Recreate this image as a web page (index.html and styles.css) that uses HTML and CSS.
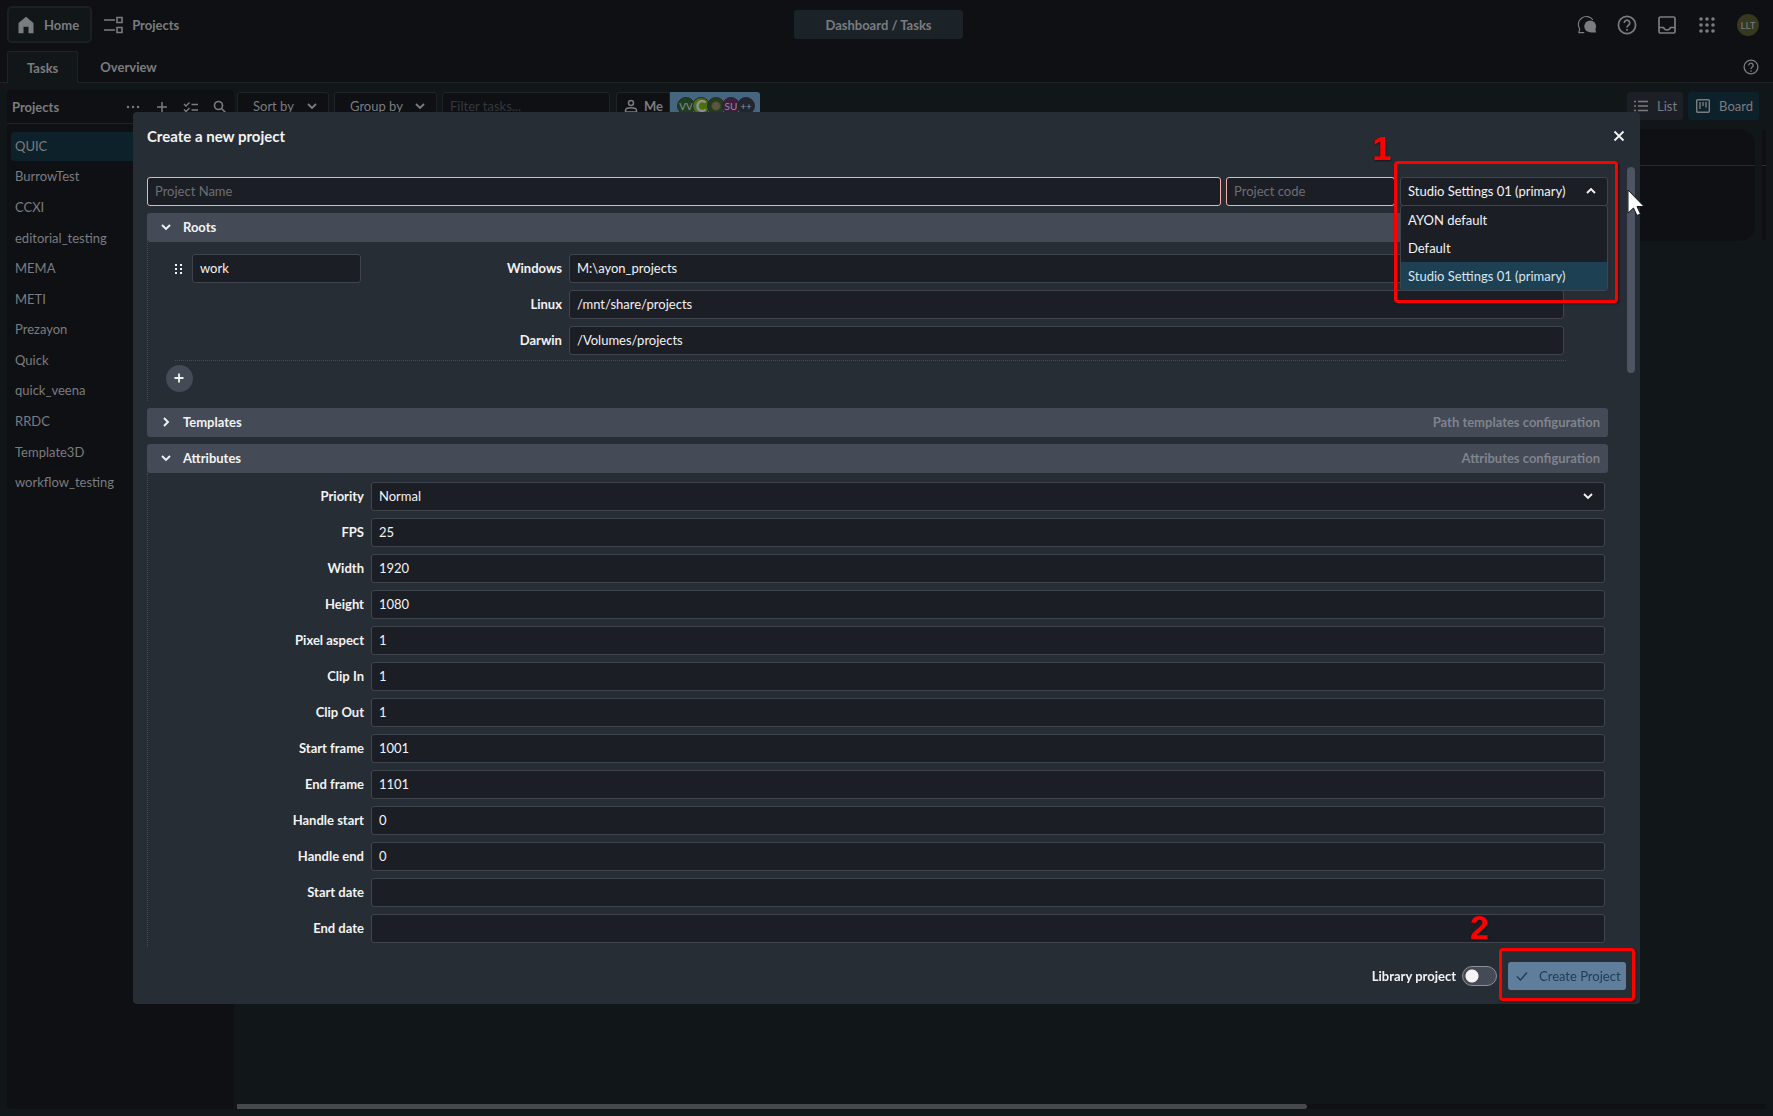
FILE: index.html
```html
<!DOCTYPE html>
<html lang="en">
<head>
    <title>Dashboard / Tasks</title>
    <meta charset="UTF-8">
    <meta name="viewport" content="width=device-width, initial-scale=1.0">
    <link rel="stylesheet" href="styles.css">
</head>
<body>
    <div class="app">
        <header class="topbar">
            <nav class="topbar-nav">
                <a class="nav-link active" href="#">
                    <svg class="icon" viewBox="0 0 24 24"><path fill="currentColor" d="M3 22V9.500l9-7.500 9 7.500V22h-6v-8H9v8z"/></svg>
                    Home
                </a>
                <a class="nav-link" href="#">
                    <svg class="icon" viewBox="0 0 20 20" fill="none" stroke="currentColor" stroke-width="1.600"><path d="M0 5h11M0 15h11M13 2.500h5v5h-5zM13 12.500h5v5h-5z"/></svg>
                    Projects
                </a>
            </nav>
            <button class="breadcrumb">Dashboard / Tasks</button>
            <div class="topbar-actions">
                <button class="icon-btn" aria-label="Feedback">
                    <svg class="icon" viewBox="0 0 22 20"><path fill="none" stroke="currentColor" stroke-width="1.300" d="M8 18.300H2l1-3.800A8.500 8.500 0 1 1 17.500 4.500"/><circle cx="14.500" cy="11.500" r="6.500" fill="currentColor"/><path fill="currentColor" d="M14.500 18.300H21l-.8-4z"/></svg>
                </button>
                <button class="icon-btn" aria-label="Help">
                    <svg class="icon" viewBox="0 0 20 20" fill="none" stroke="currentColor" stroke-width="1.700"><circle cx="10" cy="10" r="8.600"/><path d="M7.300 8a2.700 2.700 0 1 1 4.400 2c-1 .8-1.700 1.300-1.700 2.500M10 14v1.800"/></svg>
                </button>
                <button class="icon-btn" aria-label="Inbox">
                    <svg class="icon" viewBox="0 0 20 20" fill="none" stroke="currentColor" stroke-width="1.700"><rect x="2" y="2" width="16" height="16" rx="1.500"/><path d="M2 12.500h4.500c.6 1.700 2 2.500 3.500 2.500s2.900-.8 3.500-2.500H18"/></svg>
                </button>
                <button class="icon-btn" aria-label="Apps">
                    <svg class="icon" viewBox="0 0 20 20" fill="currentColor"><circle cx="4" cy="4" r="1.800"/><circle cx="10" cy="4" r="1.800"/><circle cx="16" cy="4" r="1.800"/><circle cx="4" cy="10" r="1.800"/><circle cx="10" cy="10" r="1.800"/><circle cx="16" cy="10" r="1.800"/><circle cx="4" cy="16" r="1.800"/><circle cx="10" cy="16" r="1.800"/><circle cx="16" cy="16" r="1.800"/></svg>
                </button>
                <button class="user">LLT</button>
            </div>
        </header>

        <nav class="tabs">
            <a class="tab active" href="#">Tasks</a>
            <a class="tab" href="#">Overview</a>
            <button class="icon-btn tabs-help" aria-label="Page help">
                <svg class="icon-sm" viewBox="0 0 20 20" fill="none" stroke="currentColor" stroke-width="1.700"><circle cx="10" cy="10" r="8.600"/><path d="M7.300 8a2.700 2.700 0 1 1 4.400 2c-1 .8-1.700 1.300-1.700 2.500M10 14v1.800"/></svg>
            </button>
        </nav>

        <main class="workspace">
            <aside class="sidebar">
                <div class="sidebar-header">
                    <span class="sidebar-title">Projects</span>
                    <button class="icon-btn" aria-label="More"><svg class="icon-sm" viewBox="0 0 16 16" fill="currentColor"><circle cx="3" cy="8" r="1.200"/><circle cx="8" cy="8" r="1.200"/><circle cx="13" cy="8" r="1.200"/></svg></button>
                    <button class="icon-btn" aria-label="Add project"><svg class="icon-sm" viewBox="0 0 16 16" fill="none" stroke="currentColor" stroke-width="1.500"><path d="M8 3v10M3 8h10"/></svg></button>
                    <button class="icon-btn" aria-label="Select"><svg class="icon-sm" viewBox="0 0 16 16" fill="none" stroke="currentColor" stroke-width="1.400"><path d="M1 5l2 2 3.500-3.500M1 10.500l2 2L6.500 9M8.500 5.500H15M8.500 11H15"/></svg></button>
                    <button class="icon-btn" aria-label="Search"><svg class="icon-sm" viewBox="0 0 16 16" fill="none" stroke="currentColor" stroke-width="1.600"><circle cx="6.500" cy="6.500" r="4"/><path d="M9.500 9.500l5 5"/></svg></button>
                </div>
                <ul class="project-list">
                    <li><a class="active" href="#">QUIC</a></li>
                    <li><a href="#">BurrowTest</a></li>
                    <li><a href="#">CCXI</a></li>
                    <li><a href="#">editorial_testing</a></li>
                    <li><a href="#">MEMA</a></li>
                    <li><a href="#">METI</a></li>
                    <li><a href="#">Prezayon</a></li>
                    <li><a href="#">Quick</a></li>
                    <li><a href="#">quick_veena</a></li>
                    <li><a href="#">RRDC</a></li>
                    <li><a href="#">Template3D</a></li>
                    <li><a href="#">workflow_testing</a></li>
                </ul>
            </aside>

            <section class="board">
                <div class="toolbar">
                    <button class="drop sort">Sort by
                        <svg class="icon-sm" viewBox="0 0 16 16" fill="none" stroke="currentColor" stroke-width="1.800"><path d="M4 6l4 4 4-4"/></svg>
                    </button>
                    <button class="drop group">Group by
                        <svg class="icon-sm" viewBox="0 0 16 16" fill="none" stroke="currentColor" stroke-width="1.800"><path d="M4 6l4 4 4-4"/></svg>
                    </button>
                    <input class="filter" type="text" placeholder="Filter tasks..." aria-label="Filter tasks">
                    <div class="assignees">
                        <button class="me">
                            <svg class="icon-sm" viewBox="0 0 16 16" fill="none" stroke="currentColor" stroke-width="1.500"><circle cx="8" cy="5" r="2.500"/><path d="M2.500 14v-1.500c0-1.500 2.500-2.700 5.500-2.700s5.500 1.200 5.500 2.700V14z"/></svg>
                            Me
                        </button>
                        <button class="avatars" aria-label="Assignees">
                            <span class="avatar green">VV</span>
                            <span class="avatar lime">C</span>
                            <span class="avatar photo"></span>
                            <span class="avatar purple">SU</span>
                            <span class="avatar more">++</span>
                        </button>
                    </div>
                    <div class="views">
                        <button class="view">
                            <svg class="icon-sm" viewBox="0 0 16 16" fill="none" stroke="currentColor" stroke-width="1.700"><path d="M1 3.500h2M1 8h2M1 12.500h2M5 3.500h10M5 8h10M5 12.500h10"/></svg>
                            List
                        </button>
                        <button class="view active">
                            <svg class="icon-sm" viewBox="0 0 16 16" fill="none" stroke="currentColor" stroke-width="1.400"><rect x="1.700" y="1.700" width="12.600" height="12.600" rx="1"/><path d="M5 4v7M8 4v4M11 4v5.500"/></svg>
                            Board
                        </button>
                    </div>
                </div>
                <div class="columns">
                    <div class="column red"></div>
                    <div class="column magenta"></div>
                </div>
                <div class="track"><div class="thumb"></div></div>
            </section>
        </main>
    </div>

    <div class="overlay">
        <form class="dialog" role="dialog" aria-labelledby="dialog-title">
            <div class="dialog-header">
                <h1 id="dialog-title">Create a new project</h1>
                <button class="close" type="button" aria-label="Close">
                    <svg class="icon-sm" viewBox="0 0 16 16" fill="none" stroke="currentColor" stroke-width="1.800"><path d="M3.500 3.500l9 9M12.500 3.500l-9 9"/></svg>
                </button>
            </div>

            <div class="dialog-body">
                <div class="name-row">
                    <input class="field invalid" type="text" placeholder="Project Name" aria-label="Project name">
                    <input class="field invalid" type="text" placeholder="Project code" aria-label="Project code">
                    <div class="preset">
                        <select class="field" aria-label="Anatomy preset">
                            <option>Studio Settings 01 (primary)</option>
                        </select>
                        <svg class="icon-sm arrow" viewBox="0 0 16 16" fill="none" stroke="currentColor" stroke-width="1.900"><path d="M4 10l4-4 4 4"/></svg>
                        <ul class="menu" role="listbox" aria-label="Presets">
                            <li role="option">AYON default</li>
                            <li role="option">Default</li>
                            <li class="selected" role="option" aria-selected="true">Studio Settings 01 (primary)</li>
                        </ul>
                        <div class="callout callout-preset"><span>1</span></div>
                    </div>
                </div>

                <section class="panel">
                    <button class="panel-header" type="button">
                        <svg class="icon-sm" viewBox="0 0 16 16" fill="none" stroke="currentColor" stroke-width="1.900"><path d="M4 6l4 4 4-4"/></svg>
                        <span>Roots</span>
                    </button>
                    <div class="panel-body roots">
                        <div class="root">
                            <svg class="grip" viewBox="0 0 8 12" fill="currentColor"><path d="M0 1h2v2H0zM5 1h2v2H5zM0 5h2v2H0zM5 5h2v2H5zM0 9h2v2H0zM5 9h2v2H5z"/></svg>
                            <input class="field root-name" type="text" value="work" aria-label="Root name">
                            <div class="root-paths">
                                <label for="root-windows">Windows</label>
                                <input class="field" type="text" id="root-windows" value="M:\ayon_projects">
                                <label for="root-linux">Linux</label>
                                <input class="field" type="text" id="root-linux" value="/mnt/share/projects">
                                <label for="root-darwin">Darwin</label>
                                <input class="field" type="text" id="root-darwin" value="/Volumes/projects">
                            </div>
                        </div>
                        <button class="add" type="button" aria-label="Add root">
                            <svg class="icon-sm" viewBox="0 0 16 16" fill="none" stroke="currentColor" stroke-width="1.800"><path d="M8 3.500v9M3.500 8h9"/></svg>
                        </button>
                    </div>
                </section>

                <section class="panel">
                    <button class="panel-header" type="button">
                        <svg class="icon-sm" viewBox="0 0 16 16" fill="none" stroke="currentColor" stroke-width="1.900"><path d="M6 4l4 4-4 4"/></svg>
                        <span>Templates</span>
                        <span class="hint">Path templates configuration</span>
                    </button>
                </section>

                <section class="panel">
                    <button class="panel-header" type="button">
                        <svg class="icon-sm" viewBox="0 0 16 16" fill="none" stroke="currentColor" stroke-width="1.900"><path d="M4 6l4 4 4-4"/></svg>
                        <span>Attributes</span>
                        <span class="hint">Attributes configuration</span>
                    </button>
                    <div class="panel-body attributes">
                        <label for="priority">Priority</label>
                        <div class="select-wrap">
                            <select class="field" id="priority">
                                <option>Normal</option>
                            </select>
                            <svg class="icon-sm arrow" viewBox="0 0 16 16" fill="none" stroke="currentColor" stroke-width="1.900"><path d="M4 6l4 4 4-4"/></svg>
                        </div>
                        <label for="fps">FPS</label>
                        <input class="field" type="text" id="fps" value="25">
                        <label for="width">Width</label>
                        <input class="field" type="text" id="width" value="1920">
                        <label for="height">Height</label>
                        <input class="field" type="text" id="height" value="1080">
                        <label for="pixel-aspect">Pixel aspect</label>
                        <input class="field" type="text" id="pixel-aspect" value="1">
                        <label for="clip-in">Clip In</label>
                        <input class="field" type="text" id="clip-in" value="1">
                        <label for="clip-out">Clip Out</label>
                        <input class="field" type="text" id="clip-out" value="1">
                        <label for="start-frame">Start frame</label>
                        <input class="field" type="text" id="start-frame" value="1001">
                        <label for="end-frame">End frame</label>
                        <input class="field" type="text" id="end-frame" value="1101">
                        <label for="handle-start">Handle start</label>
                        <input class="field" type="text" id="handle-start" value="0">
                        <label for="handle-end">Handle end</label>
                        <input class="field" type="text" id="handle-end" value="0">
                        <label for="start-date">Start date</label>
                        <input class="field" type="text" id="start-date">
                        <label for="end-date">End date</label>
                        <input class="field" type="text" id="end-date">
                    </div>
                </section>
            </div>

            <div class="dialog-footer">
                <label for="library">Library project</label>
                <input class="switch" type="checkbox" id="library">
                <div class="submit">
                    <button class="create" type="submit">
                        <svg class="icon-sm" viewBox="0 0 16 16" fill="none" stroke="currentColor" stroke-width="1.300"><path d="M3 8.500l3.500 3.500L13 4.500"/></svg>
                        Create Project
                    </button>
                    <div class="callout callout-create"><span>2</span></div>
                </div>
            </div>

            <div class="scrollbar"></div>
            <svg class="cursor" viewBox="0 0 18 28"><path fill="#fff" stroke="#14161c" stroke-width="1" d="M1 1v23l5.500-5 3.500 7.500 3.500-1.500-3.500-7.500H17z"/></svg>
        </form>
    </div>
</body>
</html>
```
FILE: styles.css
```css
* {
    box-sizing: border-box;
    margin: 0;
    padding: 0;
}

body {
    font-family: Lato, "Noto Sans", sans-serif;
    font-size: 13px;
    line-height: 18px;
    background: #111619;
    color: #7b7c7f;
    overflow: hidden;
}

button,
input,
select {
    font: inherit;
    color: inherit;
    border: none;
    background: none;
}

a {
    color: inherit;
    text-decoration: none;
}

ul {
    list-style: none;
}

.icon {
    display: block;
    width: 20px;
    height: 20px;
}

.icon-sm {
    display: block;
    flex: none;
    width: 16px;
    height: 16px;
}

.app {
    display: flex;
    flex-direction: column;
    height: 100vh;
}

/* top bar */
.topbar {
    display: grid;
    grid-template-columns: 1fr auto 1fr;
    align-items: center;
    height: 51px;
    padding: 0 14px 2px 7px;
    background: #0f1014;
    font-weight: 700;
}

.topbar-nav {
    display: flex;
}

.nav-link {
    display: flex;
    align-items: center;
    gap: 8px;
    height: 37px;
    padding: 0 10px;
    border: 2px solid transparent;
    border-radius: 5px;
}

.nav-link.active {
    padding: 0 11px 0 7px;
    border-color: #1c2023;
    background: #111619;
}

.breadcrumb {
    width: 169px;
    height: 29px;
    margin-right: 9px;
    border-radius: 3px;
    background: #1b2329;
}

.topbar-actions {
    display: flex;
    align-items: center;
    justify-content: flex-end;
    gap: 20px;
}

.user {
    width: 22px;
    height: 22px;
    border-radius: 50%;
    background: #36391f;
    font-size: 10px;
    font-weight: 400;
}

.tabs {
    display: flex;
    height: 32px;
    padding: 0 14px 0 7px;
    border-bottom: 1px solid #202326;
    background: #0f1014;
    font-weight: 700;
}

.tab {
    display: flex;
    align-items: center;
    height: 31px;
    padding: 0 22px;
}

.tab.active {
    height: 32px;
    padding: 0 19px;
    border: 1px solid #202326;
    border-bottom: none;
    border-radius: 3px 3px 0 0;
    background: #111619;
}

.tabs-help {
    margin-left: auto;
}

/* workspace */
.workspace {
    display: flex;
    flex: 1;
    gap: 3px;
    min-height: 0;
    padding: 7px;
}

.sidebar {
    width: 227px;
    border-radius: 4px;
    background: #0f1014;
}

.sidebar-header {
    display: flex;
    align-items: center;
    gap: 13px;
    height: 34px;
    padding: 0 6px 0 5px;
    border-bottom: 1px solid #202326;
}

.sidebar-title {
    margin-right: auto;
    font-weight: 700;
}

.project-list {
    display: grid;
    grid-auto-rows: 1fr;
    gap: 2px;
    height: 365px;
    margin: 8px 4px;
}

.project-list a {
    display: flex;
    align-items: center;
    height: 100%;
    padding: 0 4px 1px;
    border-radius: 3px;
}

.project-list a.active {
    background: #0d212b;
}

.board {
    display: flex;
    flex: 1;
    flex-direction: column;
    min-width: 0;
    padding-top: 2px;
}

.toolbar {
    display: flex;
    gap: 5px;
    height: 28px;
}

.drop {
    display: flex;
    align-items: center;
    justify-content: space-between;
    padding: 0 8px 0 15px;
    border: 1px solid #202326;
    border-radius: 3px;
    background: #0f1014;
}

.sort {
    width: 92px;
}

.group {
    width: 103px;
}

.filter {
    width: 168px;
    padding: 0 7px;
    border: 1px solid #202326;
    border-radius: 3px;
    background: #0f1014;
}

.filter::placeholder {
    color: #35373a;
}

.assignees {
    display: flex;
    margin-left: 1px;
}

.me {
    display: flex;
    align-items: center;
    gap: 5px;
    width: 54px;
    padding: 0 6px;
    border: 1px solid #202326;
    border-radius: 3px 0 0 3px;
    background: #0f1014;
    font-weight: 700;
}

.avatars {
    display: flex;
    align-items: center;
    width: 90px;
    padding: 0 7px;
    border-radius: 0 3px 3px 0;
    background: #46667f;
}

.avatar {
    flex: none;
    width: 18px;
    height: 18px;
    margin-right: -3px;
    border: 1px solid #24282d;
    border-radius: 50%;
    color: #8f9192;
    font-size: 10px;
    line-height: 16px;
}

.green {
    background: #1f3f22;
}

.lime {
    background: #4c700d;
    font-size: 16px;
    font-weight: 900;
}

.photo {
    background: radial-gradient(#5c5640 30%, #243c1c 45%);
}

.purple {
    background: #3d1e40;
}

.more {
    background: #22252d;
}

.views {
    display: flex;
    gap: 5px;
    margin-left: auto;
    margin-right: 7px;
}

.view {
    display: flex;
    align-items: center;
    gap: 8px;
    padding: 0 6px;
    border-radius: 3px;
    background: #1d1f27;
}

.view.active {
    padding: 0 6px 0 7px;
    background: #0d212b;
}

.columns {
    display: flex;
    gap: 7px;
    height: 112px;
    margin-top: 9px;
}

.column {
    border-radius: 15px;
    background: linear-gradient(var(--line), var(--line)) 0 36px / 100% 1px no-repeat #0f1014;
}

.red {
    --line: #610f12;
    flex: 1;
}

.magenta {
    --line: #6b0a62;
    width: 4px;
    border-radius: 4px 0 0 4px;
}

.track {
    height: 5px;
    margin-top: auto;
    background: #0f1014;
}

.thumb {
    width: 70%;
    height: 100%;
    border-radius: 0 3px 3px 0;
    background: #45494b;
}

/* dialog */
.overlay {
    position: fixed;
    inset: 0;
    display: flex;
    align-items: center;
    justify-content: center;
}

.dialog {
    position: relative;
    display: flex;
    flex-direction: column;
    width: 85vw;
    height: 80vh;
    border-radius: 4px;
    background: #272d34;
    color: #f2f3f4;
}

.dialog-header {
    display: flex;
    align-items: center;
    justify-content: space-between;
    height: 65px;
    padding: 0 13px 17px 14px;
}

.dialog-header h1 {
    font-size: 15px;
    font-weight: 700;
}

.dialog-body {
    display: flex;
    flex: 1;
    flex-direction: column;
    gap: 7px;
    min-height: 0;
    padding: 0 32px 0 14px;
}

.field {
    width: 100%;
    min-width: 0;
    height: 29px;
    padding: 0 7px;
    border: 1px solid #40444d;
    border-radius: 3px;
    background: #1c1e26;
    appearance: none;
}

.field::placeholder {
    color: #6d6e72;
}

.invalid {
    border-color: #f3b0a9;
}

.name-row {
    display: grid;
    grid-template-columns: 1fr 169px 208px;
    gap: 5px;
}

.preset,
.select-wrap,
.submit {
    position: relative;
}

.arrow {
    position: absolute;
    top: 6px;
    right: 9px;
    pointer-events: none;
}

.menu {
    position: absolute;
    z-index: 1;
    top: 28px;
    left: 0;
    width: 100%;
    border: 1px solid #40444d;
    border-radius: 3px;
    background: #1c1e26;
}

.menu li {
    padding: 5px 7px;
}

.menu .selected {
    background: #1d4052;
    color: #d5e6f2;
}

.callout {
    position: absolute;
    z-index: 2;
    border: 3px solid #f00;
    border-radius: 4px;
    box-shadow: 1px 1px 2px #14161c;
    pointer-events: none;
}

.callout span {
    position: absolute;
    color: #f00;
    font: 700 34px/32px "Liberation Sans", sans-serif;
    text-shadow: 1px 1px 2px #14161c;
}

.callout-preset {
    inset: -16px -10px -97px -6px;
}

.callout-preset span {
    top: -32px;
    left: -25px;
}

.callout-create {
    inset: -14px -9px -11px -9px;
}

.callout-create span {
    top: -40px;
    left: -32px;
}

.panel-header {
    display: flex;
    align-items: center;
    gap: 9px;
    width: 100%;
    height: 29px;
    padding: 0 8px 0 11px;
    border-radius: 3px;
    background: #444a56;
    font-weight: 700;
}

.hint {
    margin-left: auto;
    color: #80848c;
}

.panel-body {
    border-left: 1px dotted #444a56;
}

.panel-body label,
.dialog-footer label {
    font-weight: 700;
}

.roots {
    padding: 12px 42px 9px 18px;
}

.root {
    display: grid;
    grid-template-columns: 8px 169px 1fr;
    gap: 9px;
    margin-left: 9px;
    padding: 0 2px 5px 0;
    border-bottom: 1px dotted #444a56;
}

.grip {
    width: 8px;
    height: 12px;
    margin-top: 9px;
}

.root-paths {
    display: grid;
    grid-template-columns: 192px 1fr;
    align-items: center;
    gap: 7px;
    text-align: right;
}

.add {
    display: flex;
    align-items: center;
    justify-content: center;
    width: 27px;
    height: 27px;
    margin-top: 4px;
    border-radius: 50%;
    background: #444a56;
}

.attributes {
    display: grid;
    grid-template-columns: 216px 1fr;
    align-items: center;
    gap: 7px;
    padding: 9px 3px 4px 0;
    text-align: right;
}

.dialog-footer {
    display: flex;
    align-items: center;
    justify-content: flex-end;
    height: 58px;
    padding: 2px 14px 0 0;
}

.switch {
    width: 35px;
    height: 20px;
    margin: 0 11px 0 6px;
    border: 1px solid #8b9199;
    border-radius: 10px;
    background: radial-gradient(circle at 9px 9px, #f4f4f4 6px, #444a56 7px);
    appearance: none;
}

.create {
    display: flex;
    align-items: center;
    gap: 9px;
    width: 118px;
    height: 28px;
    padding: 0 6px;
    border-radius: 3px;
    background: #5e7e9b;
    color: #1e3c52;
    white-space: nowrap;
}

.scrollbar {
    position: absolute;
    top: 55px;
    right: 5px;
    width: 8px;
    height: 206px;
    border-radius: 4px;
    background: #4e5461;
}

.cursor {
    position: absolute;
    z-index: 3;
    top: 77px;
    right: -5px;
    width: 18px;
    height: 28px;
}
```
